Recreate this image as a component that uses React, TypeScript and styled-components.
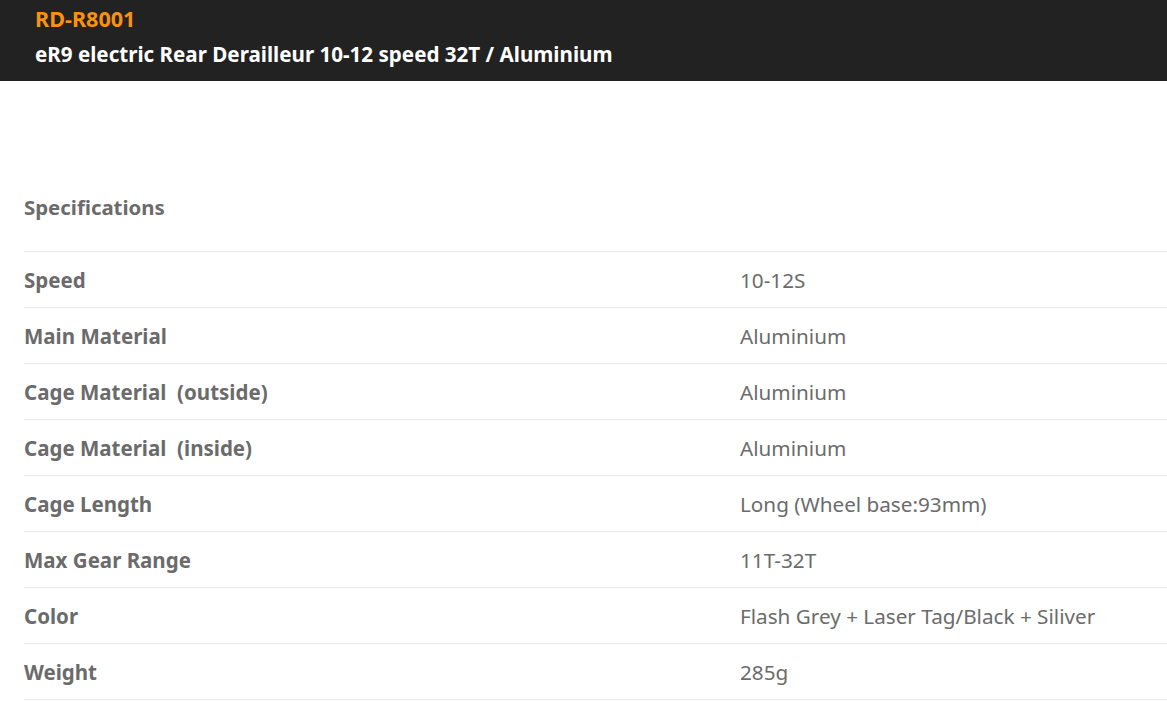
import React from "react";
import styled, { createGlobalStyle } from "styled-components";

const GlobalStyle = createGlobalStyle`
  html, body {
    margin: 0;
    padding: 0;
    background: #ffffff;
    overflow: hidden;
  }
  body {
    font-family: "Noto Sans", "Open Sans", sans-serif;
  }
`;

export const Header = styled.div`
  background: #222222;
  height: 81px;
  padding: 5px 0 0 35px;
  box-sizing: border-box;
`;

export const Code = styled.div`
  color: #f8930f;
  font-weight: 700;
  font-size: 21.6px;
  line-height: 28px;
`;

export const Title = styled.div`
  color: #ffffff;
  font-weight: 700;
  font-size: 20.6px;
  line-height: 27px;
  margin-top: 8px;
`;

export const Specs = styled.div`
  margin: 113px 0 0 24px;
`;

export const Heading = styled.div`
  color: #6b6b6b;
  font-weight: 700;
  font-size: 20.4px;
  line-height: 26px;
  padding-bottom: 31px;
  border-bottom: 1px solid #e8e8e8;
`;

export const Row = styled.div`
  display: grid;
  grid-template-columns: 716px 1fr;
  align-items: center;
  height: 56px;
  border-bottom: 1px solid #e8e8e8;
  box-sizing: border-box;
  color: #6b6b6b;
  font-size: 20.5px;
`;

export const Label = styled.div`
  font-weight: 700;
`;

export const Value = styled.div`
  font-weight: 400;
  font-size: 20.7px;
`;

const rows: [string, string][] = [
  ["Speed", "10-12S"],
  ["Main Material", "Aluminium"],
  ["Cage Material\u00a0 (outside)", "Aluminium"],
  ["Cage Material\u00a0 (inside)", "Aluminium"],
  ["Cage Length", "Long (Wheel base:93mm)"],
  ["Max Gear Range", "11T-32T"],
  ["Color", "Flash Grey + Laser Tag/Black + Siliver"],
  ["Weight", "285g"],
];

export default function App() {
  return (
    <>
      <GlobalStyle />
      <Header>
        <Code>RD-R8001</Code>
        <Title>eR9 electric Rear Derailleur 10-12 speed 32T / Aluminium</Title>
      </Header>
      <Specs>
        <Heading>Specifications</Heading>
        {rows.map(([label, value]) => (
          <Row key={label}>
            <Label>{label}</Label>
            <Value>{value}</Value>
          </Row>
        ))}
      </Specs>
    </>
  );
}
